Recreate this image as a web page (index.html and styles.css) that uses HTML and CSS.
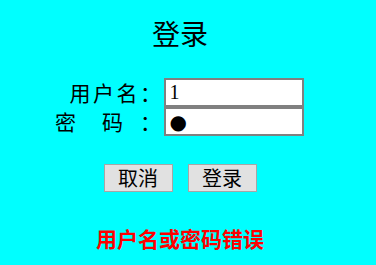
FILE: index.html
```html
<!DOCTYPE html>
<html lang="zh-CN">
<head>
<meta charset="utf-8">
<title>登录</title>
<link rel="stylesheet" href="styles.css">
</head>
<body>
<main class="page">
  <h1 class="title">登录</h1>
  <form class="form">
    <div class="fields">
      <label class="label" for="user">用户名：</label>
      <input class="field" id="user" type="text" value="1">
      <label class="label" for="pwd">密　码&nbsp;&nbsp;：</label>
      <input class="field field-pwd" id="pwd" type="text" value="●">
    </div>
    <div class="actions">
      <button class="btn" type="button">取消</button>
      <button class="btn" type="button">登录</button>
    </div>
  </form>
  <p class="error">用户名或密码错误</p>
</main>
</body>
</html>
```

FILE: styles.css
```css
html, body {
  margin: 0;
  padding: 0;
  background: #00ffff;
}
body {
  font-family: "Noto Sans CJK SC", sans-serif;
  color: #000;
}
.page {
  width: 360px;
  text-align: center;
}
.title {
  margin: 16px 0 0;
  font-size: 28px;
  line-height: 34px;
  font-weight: normal;
}
.form {
  margin: 28px 0 0;
}
.fields {
  display: grid;
  grid-template-columns: 107px 140px;
  justify-content: center;
}
.label {
  text-align: right;
  font-size: 21px;
  letter-spacing: 2.5px;
  line-height: 29px;
  white-space: nowrap;
  display: flex;
  align-items: center;
  justify-content: flex-end;
}
.field {
  box-sizing: border-box;
  width: 140px;
  height: 29px;
  margin: 0;
  padding: 0 4px;
  border: 2px solid #808080;
  background: #fff;
  font-family: "Liberation Serif", serif;
  font-size: 20px;
  color: #000;
  outline: none;
}
.field-pwd {
  font-family: "DejaVu Sans", sans-serif;
  font-size: 20px;
  padding-left: 4px;
}
.actions {
  margin-top: 28px;
  display: flex;
  justify-content: center;
  gap: 15px;
}
.btn {
  box-sizing: border-box;
  width: 69px;
  height: 28px;
  margin: 0;
  padding: 0;
  border: 1px solid #a6a6a6;
  background: #e1e1e1;
  font-family: "Noto Sans CJK SC", sans-serif;
  font-size: 20px;
  line-height: 26px;
  color: #000;
}
.error {
  margin: 33px 0 0;
  color: #ff0000;
  font-size: 21px;
  font-weight: bold;
  line-height: 26px;
}
```
